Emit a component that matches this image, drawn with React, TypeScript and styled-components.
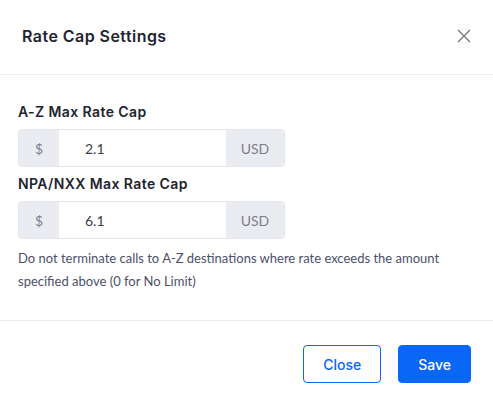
import styled, { createGlobalStyle } from 'styled-components'

const GlobalStyle = createGlobalStyle`
  html, body {
    margin: 0;
    padding: 0;
    background: #ffffff;
  }
  * {
    box-sizing: border-box;
  }
`

const heading = `Inter, "Open Sans", sans-serif`
const body = `Lato, "Noto Sans", sans-serif`

const Modal = styled.div`
  width: 493px;
  height: 406px;
  background: #fff;
  display: flex;
  flex-direction: column;
`

const Header = styled.header`
  height: 75px;
  display: flex;
  align-items: center;
  justify-content: space-between;
  padding: 0 22px 2px 22px;
  border-bottom: 1px solid #ececf0;
`

const Title = styled.h2`
  margin: 0;
  font-family: ${heading};
  font-weight: 600;
  font-size: 16px;
  color: #23232f;
  letter-spacing: 0.45px;
`

const CloseIcon = styled.button`
  border: 0;
  background: none;
  padding: 0;
  width: 14px;
  height: 14px;
  display: flex;
  cursor: pointer;
  color: #7a7a7a;
`

const Body = styled.div`
  padding: 27px 18px 27px;
  display: flex;
  flex-direction: column;
  border-bottom: 1px solid #ececf0;
`

const Label = styled.label`
  font-family: ${heading};
  font-weight: 600;
  font-size: 14px;
  line-height: 20px;
  letter-spacing: 0.4px;
  color: #23232f;
  margin-bottom: 7px;
`

const Group = styled.div`
  display: flex;
  width: 267px;
  height: 38px;
  border: 1px solid #e3e5eb;
  border-radius: 4px;
  overflow: hidden;
  margin-bottom: 7px;
`

const Addon = styled.span<{ $w: number }>`
  width: ${({ $w }) => $w}px;
  flex: none;
  background: #ebecf1;
  display: flex;
  align-items: center;
  justify-content: center;
  font-family: ${body};
  font-size: 14px;
  color: #7b7e8e;
`

const Input = styled.input`
  flex: 1;
  min-width: 0;
  border: 0;
  outline: none;
  padding: 0 0 0 26px;
  font-family: ${body};
  font-size: 14px;
  color: #3a3c4c;
  background: #fff;
`

const Help = styled.p`
  margin: 1px 0 0;
  font-family: ${body};
  font-size: 13px;
  line-height: 23px;
  color: #4d5069;
`

const Footer = styled.footer`
  flex: 1;
  display: flex;
  justify-content: flex-end;
  align-items: flex-start;
  gap: 17px;
  padding: 24px 22px 0;
`

const Button = styled.button<{ $primary?: boolean }>`
  height: 38px;
  padding: 0 19px;
  border-radius: 4px;
  border: 1px solid #0a66f5;
  background: ${({ $primary }) => ($primary ? '#0a66f5' : '#fff')};
  color: ${({ $primary }) => ($primary ? '#fff' : '#0a66f5')};
  font-family: ${heading};
  font-weight: 500;
  font-size: 14px;
  cursor: pointer;
`

function CapField({ label, value }: { label: string; value: string }) {
  return (
    <>
      <Label>{label}</Label>
      <Group>
        <Addon $w={40}>$</Addon>
        <Input defaultValue={value} />
        <Addon $w={58}>USD</Addon>
      </Group>
    </>
  )
}

export default function App() {
  return (
    <>
      <GlobalStyle />
      <Modal>
        <Header>
          <Title>Rate Cap Settings</Title>
          <CloseIcon aria-label="Close">
            <svg width="14" height="14" viewBox="0 0 14 14">
              <path d="M1 1L13 13M13 1L1 13" stroke="currentColor" strokeWidth="1.4" />
            </svg>
          </CloseIcon>
        </Header>
        <Body>
          <CapField label="A-Z Max Rate Cap" value="2.1" />
          <CapField label="NPA/NXX Max Rate Cap" value="6.1" />
          <Help>
            Do not terminate calls to A-Z destinations where rate exceeds the amount specified above (0 for No Limit)
          </Help>
        </Body>
        <Footer>
          <Button>Close</Button>
          <Button $primary>Save</Button>
        </Footer>
      </Modal>
    </>
  )
}
